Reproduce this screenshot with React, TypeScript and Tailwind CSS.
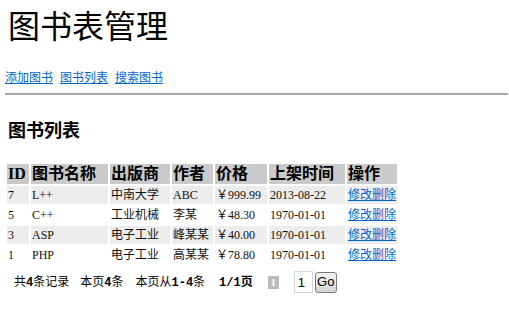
const books = [
  { id: 7, name: "L++", press: "中南大学", author: "ABC", price: "999.99", date: "2013-08-22" },
  { id: 5, name: "C++", press: "工业机械", author: "李某", price: "48.30", date: "1970-01-01" },
  { id: 3, name: "ASP", press: "电子工业", author: "峰某某", price: "40.00", date: "1970-01-01" },
  { id: 1, name: "PHP", press: "电子工业", author: "高某某", price: "78.80", date: "1970-01-01" },
];

const font = { fontFamily: '"Liberation Serif", "Noto Sans CJK SC", serif' };
const mono = { fontFamily: '"Liberation Mono", "Noto Sans CJK SC", monospace' };

export default function App() {
  return (
    <div className="min-h-[319px] w-[509px] bg-white text-black" style={font}>
      <h1 className="pl-2 pt-[9px] text-[32px] leading-[37px] font-normal">图书表管理</h1>

      <div className="mt-[24px] flex gap-[7px] pl-[5px] text-[12px] leading-[16px]">
        <a href="#" className="text-[#0066cc] underline">添加图书</a>
        <a href="#" className="text-[#0066cc] underline">图书列表</a>
        <a href="#" className="text-[#0066cc] underline">搜索图书</a>
      </div>

      <div className="ml-[5px] mt-[7px] mr-[1px] border-t-2 border-[#a8a8a8]" />

      <h3 className="mt-[25px] pl-2 text-[18px] leading-[22px] font-bold">图书列表</h3>

      <table className="ml-[5px] mt-[20px] border-separate border-spacing-[2px] whitespace-nowrap text-[12px]">
        <thead>
          <tr className="h-[20px] text-[16px] leading-[18px] font-bold">
            <th className="w-[22px] bg-[#cacaca] px-px text-left">ID</th>
            <th className="w-[77px] bg-[#cacaca] px-px text-left">图书名称</th>
            <th className="w-[60px] bg-[#cacaca] px-px text-left">出版商</th>
            <th className="w-[41px] bg-[#cacaca] px-px text-left">作者</th>
            <th className="w-[52px] bg-[#cacaca] px-px text-left">价格</th>
            <th className="w-[76px] bg-[#cacaca] px-px text-left">上架时间</th>
            <th className="w-[50px] bg-[#cacaca] px-px text-left">操作</th>
          </tr>
        </thead>
        <tbody>
          {books.map((b, i) => {
            const bg = i % 2 === 0 ? "bg-[#ececec]" : "bg-white";
            return (
              <tr key={b.id} className="h-[18px] leading-[16px] text-[#111]">
                <td className={`${bg} px-px`}>{b.id}</td>
                <td className={`${bg} px-px`}>{b.name}</td>
                <td className={`${bg} px-px`}>{b.press}</td>
                <td className={`${bg} px-px`}>{b.author}</td>
                <td className={`${bg} px-px`}>￥{b.price}</td>
                <td className={`${bg} px-px`}>{b.date}</td>
                <td className={`${bg} px-px`}>
                  <a href="#" className="text-[#0066cc] underline">修改</a>
                  <a href="#" className="text-[#0066cc] underline">删除</a>
                </td>
              </tr>
            );
          })}
        </tbody>
      </table>

      <div className="mt-[5px] flex items-center pl-[14px] text-[12px] leading-[16px]">
        <span>共<b style={mono}>4</b>条记录</span>
        <span className="ml-[11px]">本页<b style={mono}>4</b>条</span>
        <span className="ml-[12px]">本页从<b style={mono}>1-4</b>条</span>
        <span className="ml-[14px] font-bold"><span style={mono}>1/1</span>页</span>
        <span className="ml-[15px] flex h-[13px] w-[11px] items-center justify-center bg-[#bbbbbb] text-[11px] leading-[13px] font-bold text-white">1</span>
        <input
          defaultValue="1"
          className="ml-[15px] h-[22px] w-[19px] border border-[#cfd8e0] px-[3px] text-[13px] outline-none"
          style={{ fontFamily: '"Liberation Sans", Arial, sans-serif' }}
        />
        <button
          className="ml-[2px] h-[21px] w-[22px] rounded-[3px] border border-[#7a7a7a] bg-gradient-to-b from-[#f2f2f2] to-[#d6d6d6] text-[13px] leading-[18px]"
          style={{ fontFamily: '"Liberation Sans", Arial, sans-serif' }}
        >
          Go
        </button>
      </div>
    </div>
  );
}
